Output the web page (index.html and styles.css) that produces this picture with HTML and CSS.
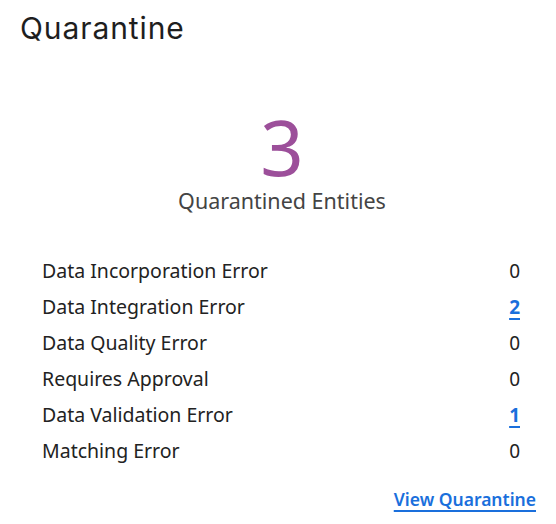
FILE: index.html
```html
<!DOCTYPE html>
<html>
<head>
<meta charset="utf-8">
<link rel="stylesheet" href="styles.css">
</head>
<body>
<div class="card">
  <h1 class="title">Quarantine</h1>
  <div class="summary">
    <div class="big">3</div>
    <div class="label">Quarantined Entities</div>
  </div>
  <ul class="list">
    <li class="row"><span>Data Incorporation Error</span><span class="val">0</span></li>
    <li class="row"><span>Data Integration Error</span><a class="val link" href="#">2</a></li>
    <li class="row"><span>Data Quality Error</span><span class="val">0</span></li>
    <li class="row"><span>Requires Approval</span><span class="val">0</span></li>
    <li class="row"><span>Data Validation Error</span><a class="val link" href="#">1</a></li>
    <li class="row"><span>Matching Error</span><span class="val">0</span></li>
  </ul>
  <div class="footer"><a class="view" href="#">View Quarantine</a></div>
</div>
</body>
</html>
```
FILE: styles.css
```css
html, body { margin: 0; padding: 0; background: #fff; }
body { font-family: "Noto Sans", "Open Sans", sans-serif; color: #222; }
.card { width: 556px; height: 524px; box-sizing: border-box; padding: 10px 20px 0 20px; }
.title { margin: 0; font-family: "Inter", "Noto Sans", sans-serif; font-weight: 400; font-size: 30px; letter-spacing: 0.9px; line-height: 36px; color: #1e1e1e; }
.summary { display: flex; flex-direction: column; align-items: center; margin-top: 61px; padding-left: 8px; }
.big { font-size: 76px; line-height: 80px; color: #9c4f9a; font-weight: 400; }
.label { font-size: 21.5px; line-height: 28px; color: #444; }
.list { list-style: none; margin: 38px 0 0 0; padding: 0 15px 0 22px; }
.row { display: flex; justify-content: space-between; align-items: center; height: 36px; font-size: 19.5px; line-height: 36px; color: #222; }
.val { font-size: 19px; padding-right: 1px; }
.link { color: #1a6fdc; font-weight: 700; text-decoration: underline; text-underline-offset: 4px; text-decoration-thickness: 2px; }
.footer { display: flex; justify-content: flex-end; margin-top: 18px; }
.view { color: #1a6fdc; font-weight: 600; font-size: 17.5px; line-height: 24px; text-decoration: underline; text-underline-offset: 4px; text-decoration-thickness: 2px; }
```
